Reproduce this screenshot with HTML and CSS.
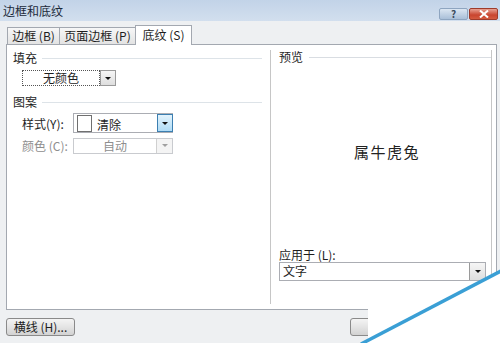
FILE: index.html
```html
<!DOCTYPE html>
<html lang="zh-CN">
<head>
    <meta charset="UTF-8">
    <title>边框和底纹</title>
    <link rel="stylesheet" href="styles.css">
</head>
<body>

    <div class="window">
        <!-- Title bar -->
        <div class="titlebar">
            <span class="title">边框和底纹</span>
            <div class="caption-buttons">
                <span class="cap-btn help">?</span>
                <span class="cap-btn close">
                    <svg width="10" height="8" viewBox="0 0 10 8"><path d="M1 0.5 L9 7.5 M9 0.5 L1 7.5" stroke="#fff" stroke-width="2"/></svg>
                </span>
            </div>
        </div>

        <div class="client">
            <div class="tabs">
                <div class="tab tab-border">边框 (B)</div>
                <div class="tab tab-page">页面边框 (P)</div>
                <div class="tab tab-shade active">底纹 (S)</div>
            </div>

            <div class="panel">
                <div class="left-col">
                    <div class="group-head"><span>填充</span><i class="rule"></i></div>
                    <div class="fill-combo">
                        <span class="fill-value">无颜色</span>
                        <span class="drop-btn"><i class="arrow"></i></span>
                    </div>

                    <div class="group-head pattern-head"><span>图案</span><i class="rule"></i></div>
                    <div class="field-row style-row">
                        <span class="field-label">样式(Y):</span>
                        <div class="combo style-combo">
                            <span class="swatch"></span>
                            <span class="combo-text">清除</span>
                            <span class="drop-btn hot"><i class="arrow"></i></span>
                        </div>
                    </div>
                    <div class="field-row color-row disabled">
                        <span class="field-label">颜色 (C):</span>
                        <div class="combo color-combo">
                            <span class="combo-text">自动</span>
                            <span class="drop-btn"><i class="arrow"></i></span>
                        </div>
                    </div>
                </div>

                <div class="preview">
                    <div class="group-head"><span>预览</span><i class="rule"></i></div>
                    <div class="sample">属牛虎兔</div>
                    <div class="apply-label">应用于 (L):</div>
                    <div class="combo apply-combo">
                        <span class="combo-text">文字</span>
                        <span class="drop-btn"><i class="arrow"></i></span>
                    </div>
                </div>
            </div>

            <div class="footer">
                <button class="btn btn-line">横线 (H)...</button>
                <div class="footer-right">
                    <button class="btn btn-ok">确定</button>
                    <button class="btn btn-cancel">取消</button>
                </div>
            </div>
        </div>

        <!-- page curl in the corner -->
        <svg class="curl" width="145" height="75" viewBox="355 268 145 75">
            <polygon points="368,296 454,296 500,272 500,343 363,343 368,340" fill="#ffffff"/>
            <line x1="361" y1="344" x2="501" y2="271" stroke="#3a9fd5" stroke-width="3.5"/>
        </svg>
    </div>

</body>
</html>
```

FILE: styles.css
```css
* {
    box-sizing: border-box;
}

body {
    margin: 0;
    font-family: "Noto Sans CJK SC", "Liberation Sans", sans-serif;
    font-size: 12px;
    color: #1e1e1e;
    background: #eef0f2;
}

.window {
    position: relative;
    width: 500px;
    height: 343px;
    overflow: hidden;
}

/* Title bar */
.titlebar {
    height: 21px;
    display: flex;
    align-items: center;
    justify-content: space-between;
    padding-left: 3px;
    background: linear-gradient(#c2d3e8, #d2dfee);
}

.title {
    font-size: 12px;
    line-height: 14px;
    color: #1c2a3a;
}

.caption-buttons {
    display: flex;
    align-self: flex-start;
    margin-top: 8px;
    margin-right: 2px;
    gap: 1px;
}

.cap-btn {
    width: 29px;
    height: 12px;
    display: flex;
    align-items: center;
    justify-content: center;
    border-radius: 2px;
    font-size: 10px;
    line-height: 12px;
}

.help {
    background: linear-gradient(#dbe6f2, #a9bfd8);
    border: 1px solid #8ea5c0;
    color: #3b4a5c;
    font-weight: bold;
}

.close {
    background: linear-gradient(#e8a192, #c9452f 60%, #d45a3f);
    border: 1px solid #9e3b2b;
}

/* Client area */
.client {
    padding: 4px 3px 0 6px;
}

.tabs {
    display: flex;
    align-items: flex-end;
    height: 19px;
    padding-left: 1px;
    position: relative;
    z-index: 1;
}

.tab {
    height: 17px;
    line-height: 15px;
    text-align: center;
    border: 1px solid #a3a8b0;
    border-bottom: none;
    background: linear-gradient(#f7f7f7, #e3e3e3);
    color: #1e1e1e;
}

.tab + .tab {
    margin-left: -1px;
}

.tab-border {
    width: 53px;
}

.tab-page {
    width: 77px;
}

.tab-shade {
    width: 57px;
}

.tab.active {
    height: 20px;
    line-height: 18px;
    background: #fff;
    margin-bottom: -1px;
}

.panel {
    height: 266px;
    display: flex;
    background: #fff;
    border: 1px solid #a3a8b0;
}

.group-head {
    display: flex;
    align-items: center;
    height: 14px;
    line-height: 14px;
}

.rule {
    flex: 1;
    height: 1px;
    margin-left: 5px;
    background: #dde3e8;
}

/* Left column: fill and pattern */
.left-col {
    width: 263px;
    padding: 6px 8px 0 6px;
}

.fill-combo {
    display: flex;
    width: 94px;
    height: 16px;
    margin: 5px 0 0 9px;
}

.fill-value {
    flex: 1;
    text-align: center;
    line-height: 14px;
    border: 1px dotted #555;
}

.drop-btn {
    width: 16px;
    display: flex;
    align-items: center;
    justify-content: center;
    border: 1px solid #9a9a9a;
    background: linear-gradient(#f6f6f6, #dedede);
}

.arrow {
    width: 0;
    height: 0;
    border-left: 3px solid transparent;
    border-right: 3px solid transparent;
    border-top: 3px solid #111;
}

.pattern-head {
    margin-top: 9px;
}

.field-row {
    display: flex;
    align-items: center;
    padding-left: 9px;
}

.field-label {
    width: 51px;
}

.style-row {
    margin-top: 4px;
}

.color-row {
    margin-top: 4px;
}

.combo {
    display: flex;
    border: 1px solid #abadb3;
    background: #fff;
}

.combo .drop-btn {
    border-width: 0 0 0 1px;
}

.combo-text {
    line-height: 14px;
}

.style-combo {
    width: 100px;
    height: 20px;
    align-items: center;
    padding-left: 3px;
}

.swatch {
    width: 15px;
    height: 17px;
    border: 1px solid #707070;
    background: #fff;
}

.style-combo .combo-text {
    flex: 1;
    padding-left: 5px;
    padding-top: 3px;
}

.style-combo .drop-btn.hot {
    height: 100%;
    border: 1px solid #3c7fb1;
    margin-right: -1px;
    background: linear-gradient(#e3f3fc, #b0dcf6);
}

.disabled {
    color: #8e8e8e;
}

.color-combo {
    width: 100px;
    height: 16px;
    border-color: #c9cbcf;
}

.color-combo .combo-text {
    flex: 1;
    text-align: center;
}

.color-combo .drop-btn {
    border-color: #d0d0d0;
    background: #f4f4f4;
}

.color-combo .arrow {
    border-top-color: #a0a0a0;
}

/* Right column: preview */
.preview {
    width: 222px;
    height: 254px;
    margin-top: 5px;
    display: flex;
    flex-direction: column;
    border-left: 1px solid #c6c6c6;
    border-right: 1px solid #c6c6c6;
}

.preview .group-head {
    padding-left: 8px;
}

.preview .rule {
    margin-left: 6px;
    background: #d9dde2;
}

.sample {
    margin-top: 78px;
    text-align: center;
    font-size: 15px;
    line-height: 20px;
    letter-spacing: 1.5px;
    padding-left: 12px;
    color: #222;
}

.apply-label {
    margin-top: 86px;
    padding-left: 8px;
    line-height: 14px;
}

.apply-combo {
    width: 207px;
    height: 19px;
    margin-left: 8px;
}

.apply-combo .combo-text {
    flex: 1;
    padding: 1px 0 0 3px;
}

/* Footer buttons */
.footer {
    display: flex;
    justify-content: space-between;
    margin-top: 8px;
}

.btn {
    height: 18px;
    padding: 0;
    font-family: inherit;
    font-size: 12px;
    line-height: 14px;
    color: #1e1e1e;
    border: 1px solid #8a8a8a;
    border-radius: 3px;
    background: linear-gradient(#f4f4f4, #e4e4e4 50%, #d2d2d2);
}

.btn-line {
    width: 69px;
}

.footer-right {
    display: flex;
    gap: 6px;
}

.btn-ok {
    width: 75px;
}

.btn-cancel {
    width: 66px;
}

.curl {
    position: absolute;
    right: 0;
    bottom: 0;
}
```
